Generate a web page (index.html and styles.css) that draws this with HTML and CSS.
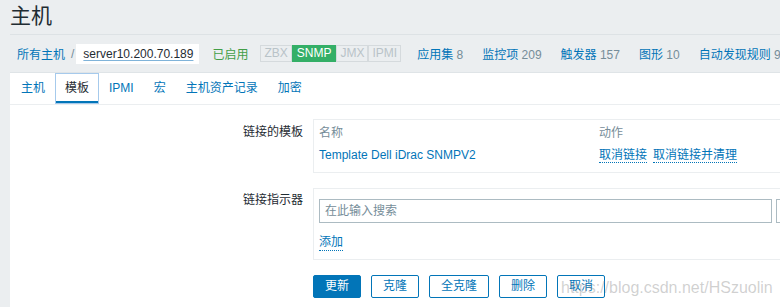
FILE: index.html
```html
<!DOCTYPE html>
<html lang="zh-CN">
<head>
<meta charset="utf-8">
<title>主机</title>
<link rel="stylesheet" href="styles.css">
</head>
<body>
<header class="page-header">
  <h1 class="title">主机</h1>
  <div class="crumbs">
    <a class="crumb-link">所有主机</a>
    <span class="sep">/</span>
    <span class="current"><span class="current-text">server10.200.70.189</span></span>
    <span class="status-on">已启用</span>
    <span class="badges">
      <span class="badge">ZBX</span><span class="badge badge-green">SNMP</span><span class="badge">JMX</span><span class="badge">IPMI</span>
    </span>
    <nav class="host-links">
      <a class="hl">应用集 <span class="num">8</span></a>
      <a class="hl">监控项 <span class="num">209</span></a>
      <a class="hl">触发器 <span class="num">157</span></a>
      <a class="hl">图形 <span class="num">10</span></a>
      <a class="hl">自动发现规则 <span class="num">9</span></a>
    </nav>
  </div>
</header>
<main class="panel">
  <ul class="tabs">
    <li class="tab">主机</li>
    <li class="tab tab-active">模板</li>
    <li class="tab">IPMI</li>
    <li class="tab">宏</li>
    <li class="tab">主机资产记录</li>
    <li class="tab">加密</li>
  </ul>
  <div class="form">
    <div class="label">链接的模板</div>
    <div class="box box-table">
      <div class="trow thead">
        <span class="col-name">名称</span>
        <span class="col-act">动作</span>
      </div>
      <div class="trow tbody">
        <span class="col-name"><a class="link">Template Dell iDrac SNMPV2</a></span>
        <span class="col-act actions"><a class="link dotted">取消链接</a><a class="link dotted">取消链接并清理</a></span>
      </div>
    </div>

    <div class="label label2">链接指示器</div>
    <div class="box box-search">
      <div class="search-line">
        <div class="search-input"><span class="placeholder">在此输入搜索</span></div>
        <div class="select-btn">选择</div>
      </div>
      <a class="link dotted add-link">添加</a>
    </div>

    <div class="label"></div>
    <div class="buttons">
      <button class="btn btn-primary">更新</button>
      <button class="btn">克隆</button>
      <button class="btn">全克隆</button>
      <button class="btn">删除</button>
      <button class="btn">取消</button>
    </div>
  </div>
  <div class="watermark">https://blog.csdn.net/HSzuolin</div>
</main>
</body>
</html>
```
FILE: styles.css
```css
html, body {
  margin: 0;
  padding: 0;
  overflow: hidden;
}
body {
  background: #ebeef0;
  font-family: "Liberation Sans", Arial, "Noto Sans CJK SC", sans-serif;
  font-size: 12px;
  color: #1f2c33;
  width: 780px;
  height: 307px;
  position: relative;
}
a { cursor: pointer; }

.title {
  margin: 0 0 0 10px;
  line-height: 31px;
  font-size: 21px;
  font-weight: normal;
  color: #1f2c33;
  border-bottom: 1px solid #dde2e5;
  box-sizing: border-box;
  height: 35px;
}

.crumbs {
  display: flex;
  align-items: center;
  height: 37px;
  margin-left: 10px;
  padding-left: 7px;
  white-space: nowrap;
}
.crumb-link { color: #0275b8; }
.sep { color: #768d99; margin: 0 2px 0 6px; }
.current {
  background: #fff;
  height: 20px;
  line-height: 20px;
  padding: 0 6px 0 7px;
}
.current-text {
  color: #1f2c33;
  text-decoration: underline;
  text-decoration-color: #7fb3d9;
  text-underline-offset: 2px;
}
.status-on { color: #429e47; margin-left: 13px; }
.badges { display: flex; margin-left: 12px; }
.badge {
  height: 17px;
  line-height: 15px;
  box-sizing: border-box;
  padding: 0 3px;
  border: 1px solid #d5dadd;
  color: #b9c3c8;
  background: #ebeef0;
}
.badge-green {
  background: #34af67;
  border-color: #34af67;
  color: #fff;
  padding: 0 4px;
}
.host-links { display: flex; gap: 19px; margin-left: 16px; }
.hl { color: #0275b8; }
.num { color: #768d99; }

.panel {
  margin-left: 10px;
  background: #fff;
  border-top: 1px solid #dfe4e7;
  height: 240px;
  position: relative;
}
.tabs {
  list-style: none;
  margin: 0;
  padding: 0 0 0 1px;
  display: flex;
  height: 31px;
  border-bottom: 1px solid #ebeef0;
}
.tab {
  padding: 0 10px;
  line-height: 31px;
  color: #0275b8;
}
.tab-active {
  color: #1f2c33;
  box-shadow: inset 0 0 0 1px #a6caec, inset 0 -3px 0 #0275b8;
}

.form {
  display: grid;
  grid-template-columns: 293px 700px;
  column-gap: 10px;
  row-gap: 15px;
  padding-top: 14px;
  align-items: start;
}
.label {
  text-align: right;
  padding-top: 4px;
  line-height: 18px;
  color: #1f2c33;
}
.label2 { padding-top: 3px; }
.box {
  border: 1px solid #ebeef0;
  padding: 0 5px;
}
.box-table { padding: 3px 5px 6px; }
.trow { display: flex; }
.thead { height: 21px; line-height: 21px; color: #768d99; }
.tbody { height: 22px; line-height: 22px; }
.col-name { width: 280px; }
.link { color: #0275b8; }
.actions { display: flex; gap: 6px; align-items: center; }
.dotted {
  display: inline-block;
  line-height: 14px;
  border-bottom: 1px dotted #0275b8;
}

.box-search { padding: 10px 5px 8px; }
.search-line { display: flex; gap: 4px; }
.search-input {
  width: 453px;
  height: 24px;
  box-sizing: border-box;
  border: 1px solid #acbbc2;
  padding: 0 5px;
  line-height: 22px;
}
.placeholder { color: #768d99; }
.select-btn {
  height: 24px;
  box-sizing: border-box;
  border: 1px solid #acbbc2;
  padding: 0 10px;
  line-height: 22px;
  color: #1f2c33;
}
.add-link { margin-top: 11px; line-height: 16px; }

.buttons { display: flex; gap: 10px; }
.btn {
  height: 23px;
  padding: 0 11px;
  border: 1px solid #0275b8;
  border-radius: 2px;
  background: #fff;
  color: #0275b8;
  font-family: inherit;
  font-size: 12px;
  line-height: 21px;
  margin: 0;
}
.btn-primary { background: #0275b8; color: #fff; }

.watermark {
  position: absolute;
  left: 551px;
  top: 207px;
  font-size: 16px;
  line-height: 16px;
  color: rgba(120, 120, 120, 0.35);
  white-space: nowrap;
  pointer-events: none;
}
```
